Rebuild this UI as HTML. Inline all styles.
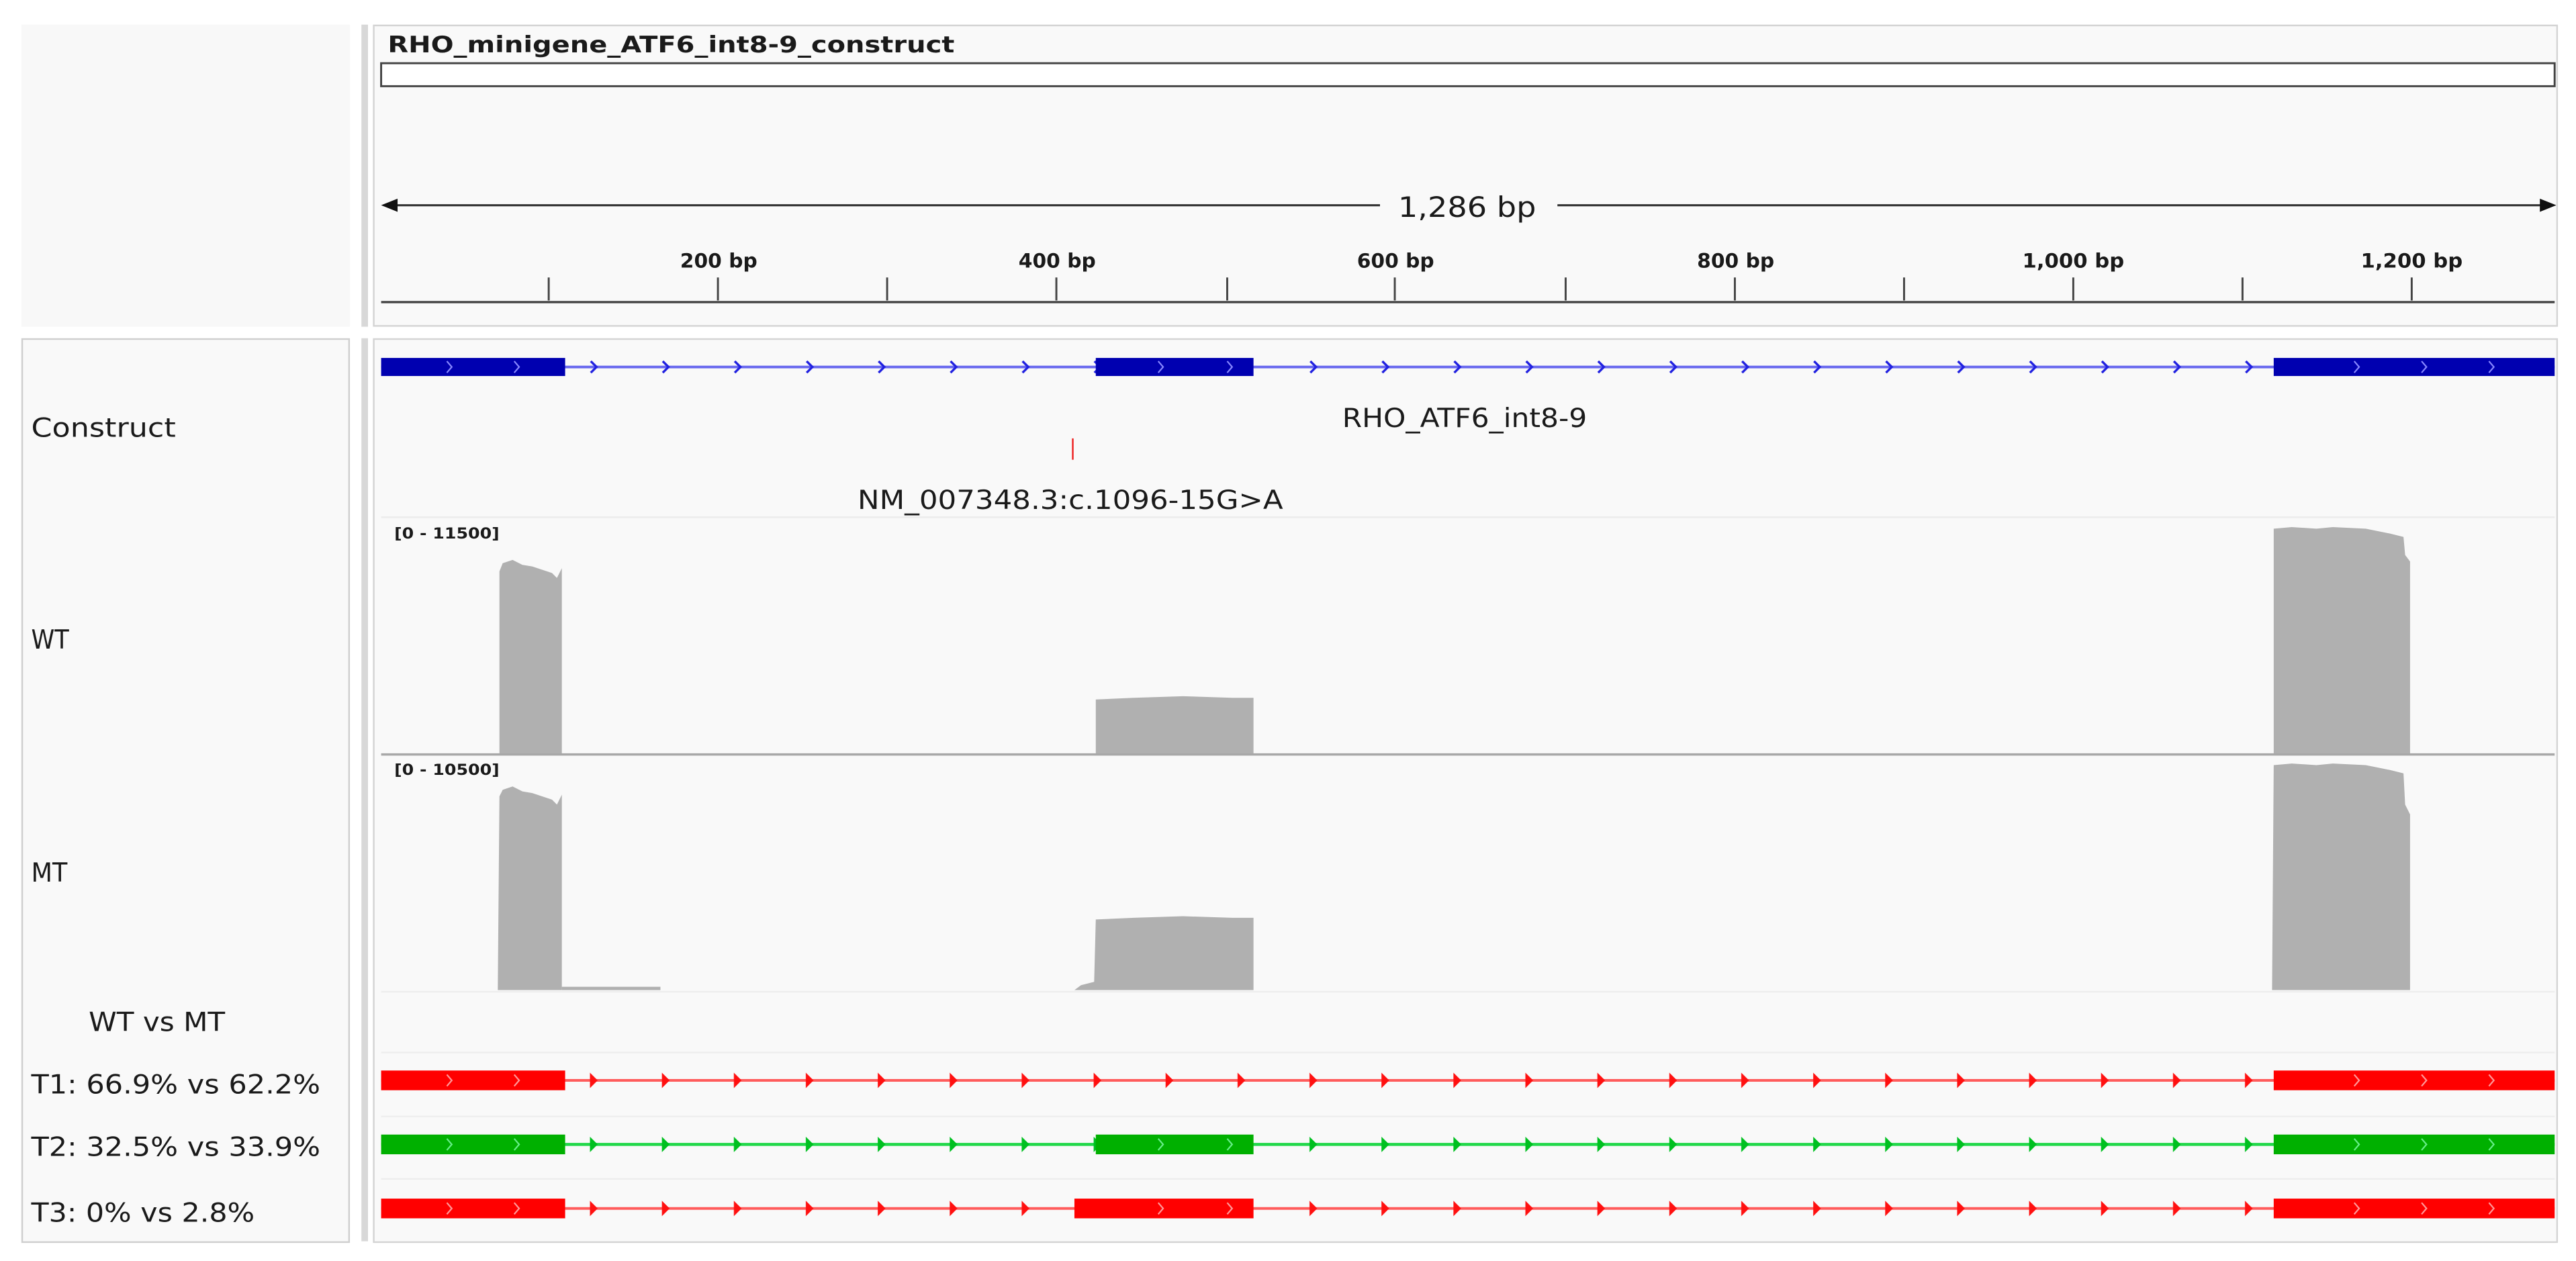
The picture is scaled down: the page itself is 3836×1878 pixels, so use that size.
<!DOCTYPE html>
<html><head><meta charset="utf-8"><style>
html,body{margin:0;padding:0;background:#fff;width:3836px;height:1878px;overflow:hidden}
svg{display:block}
text{font-family:"DejaVu Sans","Liberation Sans",sans-serif;fill:#1a1a1a}
</style></head><body>
<svg width="3836" height="1878" viewBox="0 0 1568 768" preserveAspectRatio="none" xmlns="http://www.w3.org/2000/svg">
<defs>
<pattern id="pb" patternUnits="userSpaceOnUse" x="357.6" y="0" width="43.8" height="768">
<path d="M2 220 L5.5 223.5 L2 227" fill="none" stroke="#2020e0" stroke-width="1.4"/>
</pattern>
<pattern id="pr1" patternUnits="userSpaceOnUse" x="357.6" y="0" width="43.8" height="768">
<path d="M2 654.5 L5.5 658 L2 661.5 Z" fill="#ff1010" stroke="#ff1010" stroke-width="1"/>
</pattern>
<pattern id="pg" patternUnits="userSpaceOnUse" x="357.6" y="0" width="43.8" height="768">
<path d="M2 693.5 L5.5 697 L2 700.5 Z" fill="#00c020" stroke="#00c020" stroke-width="1"/>
</pattern>
<pattern id="pr3" patternUnits="userSpaceOnUse" x="357.6" y="0" width="43.8" height="768">
<path d="M2 732.5 L5.5 736 L2 739.5 Z" fill="#ff1010" stroke="#ff1010" stroke-width="1"/>
</pattern>
</defs>
<rect width="1568" height="768" fill="#fff"/>
<rect x="13" y="15" width="200" height="184" fill="#f8f8f8"/>
<rect x="220" y="15" width="4" height="184" fill="#d8d8d8"/>
<rect x="220" y="206" width="4" height="550" fill="#d8d8d8"/>
<rect x="227.5" y="15.5" width="1329" height="183" fill="#f9f9f9" stroke="#d4d4d4"/>
<text x="236" y="32" font-size="14" font-weight="bold" textLength="345" lengthAdjust="spacingAndGlyphs">RHO_minigene_ATF6_int8-9_construct</text>
<rect x="232" y="38.5" width="1323" height="14" fill="#fff" stroke="#444" stroke-width="1.2"/>
<line x1="236" y1="125" x2="840" y2="125" stroke="#333" stroke-width="1.3"/>
<line x1="948" y1="125" x2="1548" y2="125" stroke="#333" stroke-width="1.3"/>
<path d="M232 125 L242 121 L242 129 Z" fill="#111"/>
<path d="M1556 125 L1546 121 L1546 129 Z" fill="#111"/>
<text x="851" y="132" font-size="17" textLength="84" lengthAdjust="spacingAndGlyphs">1,286 bp</text>
<g font-size="12" font-weight="bold">
<text x="414" y="163" textLength="47" lengthAdjust="spacingAndGlyphs">200 bp</text>
<text x="620" y="163" textLength="47" lengthAdjust="spacingAndGlyphs">400 bp</text>
<text x="826" y="163" textLength="47" lengthAdjust="spacingAndGlyphs">600 bp</text>
<text x="1033" y="163" textLength="47" lengthAdjust="spacingAndGlyphs">800 bp</text>
<text x="1231" y="163" textLength="62" lengthAdjust="spacingAndGlyphs">1,000 bp</text>
<text x="1437" y="163" textLength="62" lengthAdjust="spacingAndGlyphs">1,200 bp</text>
</g>
<g stroke="#444" stroke-width="1.2">
<line x1="334" y1="169" x2="334" y2="183"/><line x1="437" y1="169" x2="437" y2="183"/>
<line x1="540" y1="169" x2="540" y2="183"/><line x1="643" y1="169" x2="643" y2="183"/>
<line x1="747" y1="169" x2="747" y2="183"/><line x1="849" y1="169" x2="849" y2="183"/>
<line x1="953" y1="169" x2="953" y2="183"/><line x1="1056" y1="169" x2="1056" y2="183"/>
<line x1="1159" y1="169" x2="1159" y2="183"/><line x1="1262" y1="169" x2="1262" y2="183"/>
<line x1="1365" y1="169" x2="1365" y2="183"/><line x1="1468" y1="169" x2="1468" y2="183"/>
</g>
<line x1="232" y1="184" x2="1555" y2="184" stroke="#444" stroke-width="1.4"/>
<rect x="13.5" y="206.5" width="199" height="550" fill="#f9f9f9" stroke="#cfcfcf"/>
<g font-size="16">
<text x="19" y="266" textLength="88" lengthAdjust="spacingAndGlyphs">Construct</text>
<text x="19" y="395" textLength="23" lengthAdjust="spacingAndGlyphs">WT</text>
<text x="19" y="537" textLength="22" lengthAdjust="spacingAndGlyphs">MT</text>
<text x="54" y="628" textLength="83" lengthAdjust="spacingAndGlyphs">WT vs MT</text>
<text x="19" y="666" textLength="176" lengthAdjust="spacingAndGlyphs">T1: 66.9% vs 62.2%</text>
<text x="19" y="704" textLength="176" lengthAdjust="spacingAndGlyphs">T2: 32.5% vs 33.9%</text>
<text x="19" y="744" textLength="136" lengthAdjust="spacingAndGlyphs">T3: 0% vs 2.8%</text>
</g>
<rect x="227.5" y="206.5" width="1329" height="550" fill="#f9f9f9" stroke="#d4d4d4"/>
<line x1="232" y1="223.5" x2="1555" y2="223.5" stroke="#6666ee" stroke-width="1.6"/>
<rect x="344" y="215" width="1040" height="17" fill="url(#pb)"/>
<rect x="232" y="218" width="112" height="11" fill="#0000b0"/>
<rect x="667" y="218" width="96" height="11" fill="#0000b0"/>
<rect x="1384" y="218" width="171" height="11" fill="#0000b0"/>
<g fill="none" stroke="#8888ff" stroke-width="0.9">
<path d="M272 220 L275 223.5 L272 227"/><path d="M313 220 L316 223.5 L313 227"/>
<path d="M705 220 L708 223.5 L705 227"/><path d="M747 220 L750 223.5 L747 227"/>
<path d="M1433 220 L1436 223.5 L1433 227"/><path d="M1474 220 L1477 223.5 L1474 227"/><path d="M1515 220 L1518 223.5 L1515 227"/>
</g>
<text x="817" y="260" font-size="16" textLength="149" lengthAdjust="spacingAndGlyphs">RHO_ATF6_int8-9</text>
<line x1="653" y1="267" x2="653" y2="280" stroke="#ee2222" stroke-width="1"/>
<text x="522" y="310" font-size="16" textLength="259" lengthAdjust="spacingAndGlyphs">NM_007348.3:c.1096-15G&gt;A</text>
<line x1="232" y1="315" x2="1555" y2="315" stroke="#ececec" stroke-width="1"/>
<text x="240" y="328" font-size="9" font-weight="bold" textLength="64" lengthAdjust="spacingAndGlyphs">[0 - 11500]</text>
<g fill="#b0b0b0">
<path d="M304 459 L304 348 L306 343 L312 341 L318 344 L324 345 L330 347 L336 349 L339 352 L342 346 L342 459 Z"/>
<path d="M667 459 L667 426 L690 425 L720 424 L750 425 L763 425 L763 459 Z"/>
<path d="M1384 459 L1384 322 L1395 321 L1410 322 L1420 321 L1440 322 L1455 325 L1463 327 L1464 338 L1467 342 L1467 459 Z"/>
</g>
<line x1="232" y1="459.5" x2="1555" y2="459.5" stroke="#a8a8a8" stroke-width="1.4"/>
<text x="240" y="472" font-size="9" font-weight="bold" textLength="64" lengthAdjust="spacingAndGlyphs">[0 - 10500]</text>
<g fill="#b0b0b0">
<path d="M303 603 L304 485 L306 481 L312 479 L318 482 L324 483 L330 485 L336 487 L339 490 L342 484 L342 603 Z"/>
<rect x="342" y="601" width="60" height="2"/>
<path d="M654 603 L658 600 L666 598 L667 560 L690 559 L720 558 L750 559 L763 559 L763 603 Z"/>
<path d="M1383 603 L1384 466 L1395 465 L1410 466 L1420 465 L1440 466 L1455 469 L1463 471 L1464 490 L1467 496 L1467 603 Z"/>
</g>
<line x1="232" y1="604" x2="1555" y2="604" stroke="#eeeeee" stroke-width="1"/>
<line x1="232" y1="641" x2="1555" y2="641" stroke="#eeeeee" stroke-width="1"/>
<line x1="232" y1="680" x2="1555" y2="680" stroke="#eeeeee" stroke-width="1"/>
<line x1="232" y1="718" x2="1555" y2="718" stroke="#eeeeee" stroke-width="1"/>
<line x1="232" y1="658" x2="1555" y2="658" stroke="#ff5c5c" stroke-width="1.6"/>
<rect x="344" y="650" width="1040" height="16" fill="url(#pr1)"/>
<rect x="232" y="652" width="112" height="12" fill="#ff0000"/>
<rect x="1384" y="652" width="171" height="12" fill="#ff0000"/>
<line x1="232" y1="697" x2="1555" y2="697" stroke="#22d84a" stroke-width="1.8"/>
<rect x="344" y="689" width="1040" height="16" fill="url(#pg)"/>
<rect x="232" y="691" width="112" height="12" fill="#00b000"/>
<rect x="667" y="691" width="96" height="12" fill="#00b000"/>
<rect x="1384" y="691" width="171" height="12" fill="#00b000"/>
<line x1="232" y1="736" x2="1555" y2="736" stroke="#ff5c5c" stroke-width="1.6"/>
<rect x="344" y="728" width="1040" height="16" fill="url(#pr3)"/>
<rect x="232" y="730" width="112" height="12" fill="#ff0000"/>
<rect x="654" y="730" width="109" height="12" fill="#ff0000"/>
<rect x="1384" y="730" width="171" height="12" fill="#ff0000"/>
<g fill="none" stroke="#ff9a9a" stroke-width="0.9">
<path d="M272 654.5 L275 658 L272 661.5"/><path d="M313 654.5 L316 658 L313 661.5"/>
<path d="M1433 654.5 L1436 658 L1433 661.5"/><path d="M1474 654.5 L1477 658 L1474 661.5"/><path d="M1515 654.5 L1518 658 L1515 661.5"/>
<path d="M272 732.5 L275 736 L272 739.5"/><path d="M313 732.5 L316 736 L313 739.5"/>
<path d="M705 732.5 L708 736 L705 739.5"/><path d="M747 732.5 L750 736 L747 739.5"/>
<path d="M1433 732.5 L1436 736 L1433 739.5"/><path d="M1474 732.5 L1477 736 L1474 739.5"/><path d="M1515 732.5 L1518 736 L1515 739.5"/>
</g>
<g fill="none" stroke="#66ee88" stroke-width="0.9">
<path d="M272 693.5 L275 697 L272 700.5"/><path d="M313 693.5 L316 697 L313 700.5"/>
<path d="M705 693.5 L708 697 L705 700.5"/><path d="M747 693.5 L750 697 L747 700.5"/>
<path d="M1433 693.5 L1436 697 L1433 700.5"/><path d="M1474 693.5 L1477 697 L1474 700.5"/><path d="M1515 693.5 L1518 697 L1515 700.5"/>
</g>
</svg>
</body></html>
